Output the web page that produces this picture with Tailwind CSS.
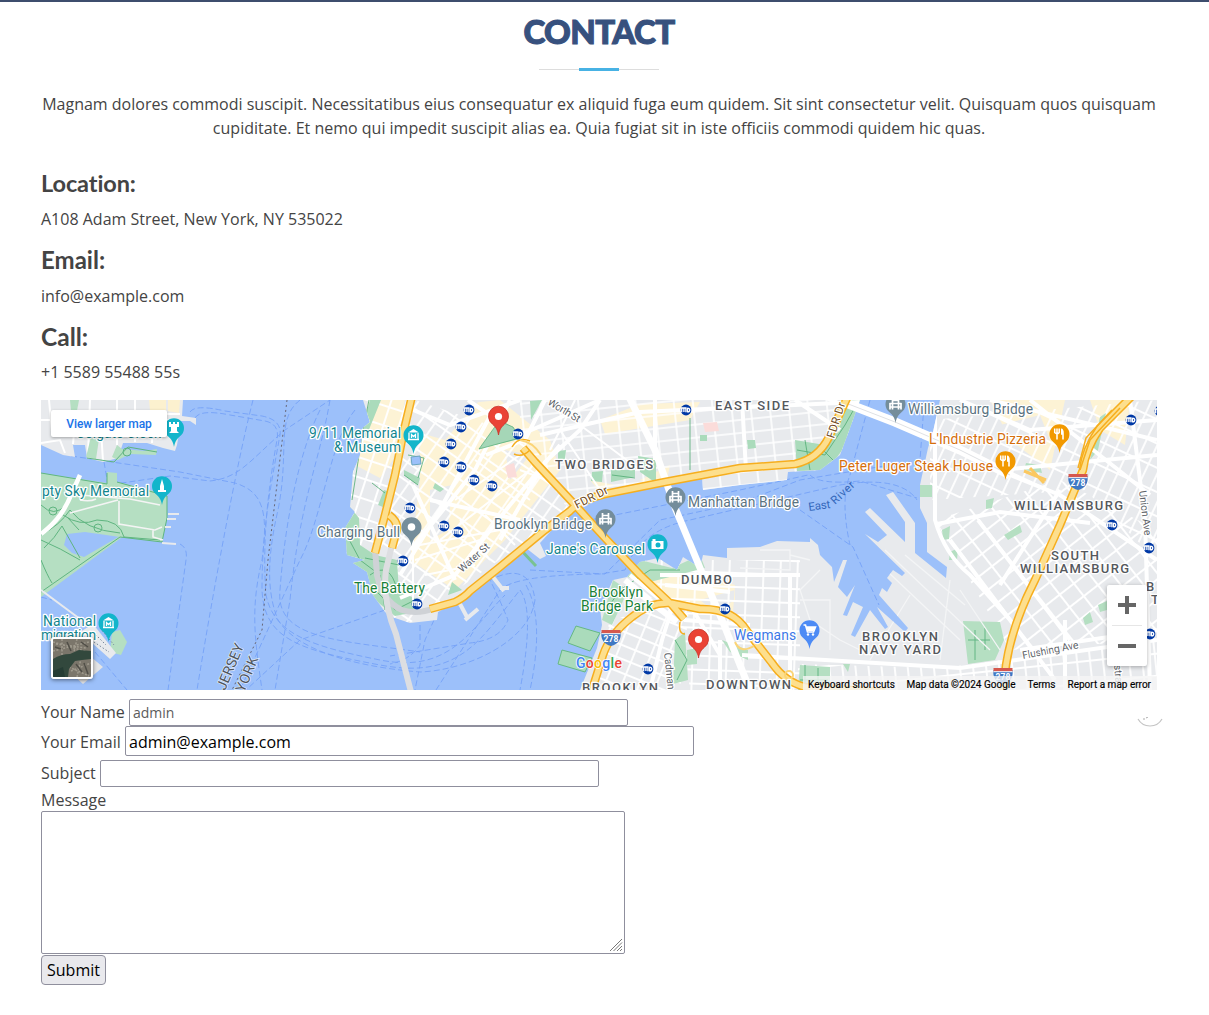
<!DOCTYPE html>
<html lang="en">
<head>
<meta charset="utf-8">
<title>Contact</title>
<script src="https://cdn.jsdelivr.net/npm/@tailwindcss/browser@4"></script>
</head>
<body class="bg-white font-['Open_Sans',sans-serif] text-base leading-6 text-[#444444] overflow-hidden">
<section class="relative h-[1015px] w-[1209px] border-t-2 border-[#3d4d6d] pl-[41px] pr-[52px]">
  <header class="flex flex-col items-center">
    <h2 class="mt-[11px] h-[38px] whitespace-nowrap font-[Lato,sans-serif] text-[33px] font-black leading-[37px] text-[#37517e]"><span class="inline-block tracking-[-0.6px] [-webkit-text-stroke:1.1px_#37517e]">CONTACT</span></h2>
    <div class="mt-[17px] flex h-[3px] w-[120px] items-center"><i class="h-px w-10 bg-[#dddddd]"></i><i class="h-[3px] w-10 bg-[#47b2e4]"></i><i class="h-px w-10 bg-[#dddddd]"></i></div>
    <p class="mt-[21px] text-center">Magnam dolores commodi suscipit. Necessitatibus eius consequatur ex aliquid fuga eum quidem. Sit sint consectetur velit. Quisquam quos quisquam<br>cupiditate. Et nemo qui impedit suscipit alias ea. Quia fugiat sit in iste officiis commodi quidem hic quas.</p>
  </header>
  <div class="mt-[29px] flex flex-col">
    <h4 class="h-[29px] font-[Lato,sans-serif] text-[23.5px] font-bold leading-[29px] tracking-[-0.1px]">Location:</h4>
    <p class="mt-[9px] mb-[15px] h-6">A108 Adam Street, New York, NY 535022</p>
    <h4 class="h-[29px] font-[Lato,sans-serif] text-[24px] font-bold leading-[28px]">Email:</h4>
    <p class="mt-[9px] mb-[15px] h-6">info@example.com</p>
    <h4 class="h-[29px] font-[Lato,sans-serif] text-[24.5px] font-bold leading-[28px]">Call:</h4>
    <p class="mt-[8px] mb-[16px] h-6">+1 5589 55488 55s</p>
  </div>

  <div class="relative h-[290px] w-[1116px] overflow-hidden font-[Roboto,sans-serif]">
  <svg class="block h-[290px] w-[1116px]" viewBox="41 400 1116 290" font-family="Roboto, sans-serif">
    <defs>
      <pattern id="gWest" width="15" height="19" patternUnits="userSpaceOnUse" patternTransform="rotate(18)"><path d="M0 1H15M1 0V19" stroke="#fff" stroke-width="2"/></pattern>
      <pattern id="gFin" width="13" height="16" patternUnits="userSpaceOnUse" patternTransform="rotate(35)"><path d="M0 1H13M1 0V16" stroke="#fff" stroke-width="1.8"/></pattern>
      <pattern id="gEast" width="19" height="13" patternUnits="userSpaceOnUse" patternTransform="rotate(-6)"><path d="M0 1H19M1 0V13" stroke="#fff" stroke-width="1.6"/></pattern>
      <pattern id="gDumbo" width="17" height="14" patternUnits="userSpaceOnUse" patternTransform="rotate(2)"><path d="M0 1H17M1 0V14" stroke="#fff" stroke-width="1.8"/></pattern>
      <pattern id="gHts" width="16" height="13" patternUnits="userSpaceOnUse" patternTransform="rotate(22)"><path d="M0 1H16M1 0V13" stroke="#fff" stroke-width="1.8"/></pattern>
      <pattern id="gWill" width="12" height="22" patternUnits="userSpaceOnUse" patternTransform="rotate(25)"><path d="M0 1H12M1 0V22" stroke="#fff" stroke-width="1.8"/></pattern>
      <pattern id="gSouth" width="18" height="16" patternUnits="userSpaceOnUse" patternTransform="rotate(-38)"><path d="M0 1H18M1 0V16" stroke="#fff" stroke-width="2"/></pattern>
      <pattern id="gLow" width="13" height="22" patternUnits="userSpaceOnUse" patternTransform="rotate(-6)"><path d="M0 1H13M1 0V22" stroke="#fff" stroke-width="1.8"/></pattern>
      <path id="pin" d="M0 19C-1 13-3 11-6 8.200A10 10 0 1 1 6 8.200C3 11 1 13 0 19Z"/>
      <g id="bridge" fill="none" stroke="#fff" stroke-width="1.700"><path d="M-3 -6V5.500M3 -6V5.500M-6 -.5H6M-6 3H6M-5.500 -1V5.500M5.500 -1V5.500M-3 -3.500H3"/></g>
      <g id="museum"><path d="M-5.500 -2.500L0 -6L5.500 -2.500Z" fill="#fff"/><path d="M-4.500 -2V4M4.500 -2V4M-5.500 4.500H5.500M-2 3V-.5L0 1.500L2-.5V3" stroke="#fff" stroke-width="1.300" fill="none"/></g>
      <g id="mta"><circle r="5.400" fill="#0039a6"/><path d="M-4.300 2.300V-2H-2.100V2M-2.100 -2H-.1V2.300M1.500 -2.200V2.300M1.500 -1.800C4.500 -1.800 4.500 2 1.500 2" fill="none" stroke="#fff" stroke-width="1.300"/></g>
      <g id="fork"><path d="M-4.800 -5.500V-1.500Q-2.500 1 -.3 -1.500V-5.500M-2.500 -5.500V5.500" stroke="#fff" stroke-width="1.500" fill="none"/><path d="M1.500 -5.500Q4.500 -5.500 4.300 0V5.500H2.700V.8H1.500Z" fill="#fff"/></g>
      <g id="shield"><path d="M-9.500 -4Q-7 -3 -5 -4.500Q0 -3 5 -4.500Q7 -3 9.500 -4Q11 7 0 10Q-11 7 -9.500 -4Z" fill="#3f78c4"/><path d="M-9.500 -6H9.500V-2.500H-9.500Z" fill="#d5574e"/><path d="M-9.500 -2.300H9.500" stroke="#fff"/><text x="0" y="5.500" text-anchor="middle" font-size="8.500" font-weight="700" fill="#fff" textLength="15">278</text></g>
      <clipPath id="man"><path d="M363 400L370 422L363 428L360 455L353 472L350 507L355 512L345 528L347 555L365 560L353 563L367 572L373 595L385 612L392 617L410 623L437 620L438 612L460 600L493 577L517 558L526 548L540 559L546 556L540 543L570 510L610 495L663 485L702 478L703 490L740 485L787 480L788 472L820 470L840 455L850 428L860 400Z"/></clipPath>
      <clipPath id="bk"><path id="bkp" d="M940 400L933 432L928 448L920 485V508L927 523V552L947 567L946 578L915 553V523L893 492L886 495L905 522V542L870 508L865 512L887 535L878 542L865 534L905 573L902 576L893 570L887 578L892 583L887 592L882 588L879 595L908 628L905 632L877 607L888 627L885 629L870 610L855 637L851 635L863 607L853 602L847 616L843 615L855 585L847 597L838 587L847 560L843 560L834 582L832 567L820 555L818 545L810 538V542L777 541L760 547L727 548V558L703 555L700 568L683 557L677 570L658 558L640 562L627 577L613 580L600 608L602 625L597 648L580 690H1157V400Z"/></clipPath>
    </defs>
    <rect x="41" y="400" width="1116" height="290" fill="#9cc0fa"/>

    <!-- ferry routes -->
    <g fill="none" stroke="#75a2f7" stroke-width=".9" stroke-dasharray="6 3">
      <path d="M71 456L180 472L235 483C265 492 268 515 262 560C250 610 255 640 262 690"/><path d="M104 462L108 485L170 476L210 481C240 478 250 460 285 430L330 400"/><path d="M253 400C235 470 210 610 197 690"/><path d="M180 544Q188 548 186 560L168 690"/><path d="M190 412Q195 404 225 411L262 416Q282 420 280 435C270 490 262 530 262 590C264 640 300 650 380 665S480 640 520 590"/><path d="M195 418Q200 409 230 415L265 421Q280 424 277 440C268 490 262 540 266 595C274 634 310 646 380 660S470 630 505 595"/><path d="M300 400C275 420 290 450 278 510C264 570 270 600 278 620C300 655 370 668 420 672C470 670 530 640 535 600Q530 560 490 580Q500 600 508 620Q500 640 470 643L390 656"/><path d="M330 400C320 460 300 500 290 600L275 690M320 410C300 450 285 520 280 590C275 640 340 640 420 652"/><path d="M355 410C330 440 322 520 300 560L240 690M385 610L300 640L246 690M41 597L52 600M95 652L127 690"/><path d="M420 625V645Q410 660 390 664M434 620L425 640L415 690M436 690L500 590Q515 575 600 574L625 570Q640 530 690 520L840 485Q900 475 917 500"/><path d="M520 590Q535 610 520 690M526 585Q545 620 530 690M530 570L605 574L660 520L740 503L800 480L920 460L924 405"/><path d="M800 510L853 547L879 605M870 400L850 475Q840 500 850 545M810 475Q820 485 860 481L917 498M590 520L740 490L808 475"/>
    </g>
    <path d="M287 400L268 560L262 630L232 690" fill="none" stroke="#667" stroke-width="1" stroke-dasharray="2 3"/>

    <!-- New Jersey shore -->
    <path d="M41 400H183L182 416L196 418V425L190 421H181L177 445L175 451L163 448L147 443H123L118 458L103 462L87 458L85 445H73L75 457L63 455L41 445Z" fill="#e8eaed"/>
    <path d="M41 443L60 440L65 453M49 400L52 432M77 400L73 444M41 420H178M90 400L88 455M101 430L103 461M117 400V445M135 400V442M154 400L152 443M145 414H180" stroke="#fff" stroke-width="2" fill="none"/>
    <path d="M149 400H166V411L150 410ZM168 400H180L179 413L168 411Z" fill="#fcf1cf"/>
    <g fill="#b5dfc2"><path d="M70 400H79L77 411H71ZM91 437L99 439L96 459L86 457ZM117 445L122 449L145 451L157 449L156 455L130 454L118 460L112 457ZM41 473L107 483V472L117 473V482L143 488L167 495V518L162 542L120 537L85 532L67 534L64 545L72 553L84 557L120 536L121 538L41 597Z"/><path d="M112 632L120 630L127 642L121 655L110 652Z"/></g>
    <g fill="none" stroke="#5fb580" stroke-width="1"><path d="M41 473L107 484V473M117 482L167 496V518L162 542L120 537L41 592M41 535Q60 525 70 510Q85 530 120 533M63 515Q80 527 97 520Q120 520 124 537L160 540M41 505Q54 518 66 505M41 540Q60 548 80 560M41 560Q47 575 52 583M44 548Q55 538 62 526L80 558M68 518L79 530"/><circle cx="98" cy="528" r="4"/><circle cx="53" cy="511" r="4"/><circle cx="127" cy="452" r="4"/><path d="M87 458L114 462L128 447L157 452"/></g>
    <path d="M41 534C57 522 65 510 72 493L80 475" fill="none" stroke="#fff" stroke-width="4.500"/>
    <path d="M80 495L130 499L160 505M119 501V524L155 530L162 527M153 529V537L163 540M80 500Q90 502 96 499M70 513L118 500" stroke="#f4f4f4" stroke-width="1.600" fill="none"/>
    <path d="M168 514H179M167 519H176M165 527H171M162 543L176 544" stroke="#e8eaed" stroke-width="2"/>
    <path d="M41 590L80 619" stroke="#e8eaed" stroke-width="2"/>
    <path d="M80 632L93 624L116 653L110 659L91 642Z" fill="#e8eaed"/><path d="M83 684L62 665L85 652L103 667Z" fill="#e3e4e6"/><path d="M93 632L106 645M100 628L114 645M91 640L109 652" stroke="#789" stroke-width="1" stroke-dasharray="1.500 2"/>

    <!-- Manhattan -->
    <g clip-path="url(#man)">
      <path d="M340 400H870V630H340Z" fill="#e8eaed"/>
      <path d="M369 400H405L393 460L380 478L357 466L363 430ZM420 440L450 405L500 400L550 440L560 470L505 540L455 590L410 560L420 480ZM600 420L640 404L700 402L690 420L605 434ZM640 480L670 465L665 490ZM590 480L615 485L600 492Z" fill="#fdf3d5"/>
      <path d="M425 400H480L445 440L410 430ZM430 490L452 485L448 530L430 540ZM505 450L530 455L510 480Z" fill="#e8eaed"/>
      <path d="M340 400H415L375 560H340Z" fill="url(#gWest)"/><path d="M415 400L520 435L570 510L400 630L370 570Z" fill="url(#gFin)"/><path d="M520 400H860V480L570 512L520 440Z" fill="url(#gEast)"/>
      <path d="M345 528L350 507L359 518L360 545L375 555L397 560L399 592L420 600L415 612L395 616L375 600L362 570L345 558ZM370 400H381L366 437H360ZM404 470L420 478L418 485L404 475ZM480 448L502 420L513 428L520 439ZM384 490L390 492L383 507L378 505ZM435 483L444 489L440 492L433 488ZM452 582L462 590L448 595ZM611 470H635V477L611 482ZM638 456L656 459V483L640 472ZM592 472L603 471L602 482L591 481ZM795 440L825 445L840 400H862L852 436L828 470L797 471ZM700 435H707V441H700ZM558 451L566 450L565 459L558 462ZM530 401L542 400L531 420ZM747 440H755L756 448L748 449Z" fill="#aadbbb"/>
      <g fill="none" stroke="#4fab72" stroke-width=".8"><path d="M350 510L344 530L360 560L380 575L385 610M365 558L399 565M369 400L363 430L352 500M372 483L385 493M404 475L418 485M797 450L825 455L845 425L858 402M805 440L810 470M820 447L835 462M690 418V470M370 575Q390 560 397 590M375 590L395 610L415 600M612 475L635 478M408 455L424 458L418 478"/></g>
      <path d="M703 423L717 422L719 431L705 432ZM505 466L514 463L517 477L508 478Z" fill="#fbdcda"/><path d="M411 457L420 456L421 464L412 465Z" fill="#9cc0fa" stroke="#6ba5c0"/>
      <g fill="none" stroke="#fff" stroke-width="4"><path d="M468 400L520 436M490 416L441 508L400 575M510 400L475 470L411 550M413 410L450 425L520 400M524 440L486 455M560 445L510 505L455 575L400 598M600 400L580 430L545 462L500 540M520 435L600 400M540 435L640 412L860 402M655 400V460M545 400L525 440M742 400L746 470M795 400L840 430M413 485L455 580M430 500L520 520" /></g>
      <path d="M479 449L499 421L513 427L520 438Z" fill="#a5d6b7" stroke="#4fab72" stroke-width=".7"/>
      <g fill="none" stroke="#fff" stroke-width="2"><path d="M420 545L500 530M415 560L480 540M425 575L475 565M475 460L530 500M455 500L520 455M440 540L530 470M485 515L515 545M460 520L490 560M413 523V600M560 410L640 470M560 430L600 490M575 400L550 450M520 470L560 485"/></g>
    </g>
    <path d="M459 602L468 619M465 620L478 609M493 577L504 591M500 588H509" stroke="#e8eaed" stroke-width="4" fill="none"/>
    <path d="M520 549L536 566" stroke="#79c291" stroke-width="3"/>

    <!-- Brooklyn -->
    <use href="#bkp" fill="#e8eaed"/>
    <g clip-path="url(#bk)">
      <path d="M648 575H700L735 585L733 612L670 605ZM990 400L1065 400L1050 470L1010 440ZM1090 400H1130L1125 445L1100 430ZM700 600L715 612L735 600V590Z" fill="#fdf3d5"/>
      <path d="M1000 425L1040 415L1050 440L1020 445Z" fill="#e8eaed"/>
      <path d="M610 620L690 600L680 690H590Z" fill="url(#gHts)"/><path d="M640 560L800 560L800 690H690L680 615Z" fill="url(#gDumbo)"/><path d="M930 420L1157 400V560L1085 490L930 500Z" fill="url(#gWill)"/><path d="M935 520L1060 480L1157 530V640L1010 650Z" fill="url(#gSouth)"/><path d="M798 664L940 668L1157 640V690H798Z" fill="url(#gLow)"/>
      <path d="M800 665L830 667V690H798ZM963 621L1000 622L1004 640L995 660L968 664ZM627 577L640 560L672 568L700 555L705 568L650 582ZM602 620L613 580L628 590L612 625ZM675 640L685 632L688 680L673 684ZM687 650L697 648V664L687 665ZM722 640L748 650V660L730 652ZM843 664H850L848 672ZM942 530L950 526L949 539L943 540ZM950 552L958 548L957 560L949 560ZM1026 463L1040 465L1042 473L1024 470ZM1004 535L1020 525L1022 532L1008 540ZM986 500L994 498L992 508L986 509ZM1100 417L1106 413L1098 450L1090 460ZM1083 618L1090 612L1093 622L1085 625ZM1098 605L1107 601V610L1100 612ZM920 485H932V497H920Z" fill="#b5dfc2"/>
      <path d="M800 680H828M805 665V690M818 668V690M968 640H990M975 630V660M985 628V650M605 612L620 590L650 570L680 570M675 640L687 660L677 680" stroke="#63b683" fill="none"/>
      <g fill="none" stroke="#f4f5f6" stroke-width="1.300"><path d="M760 550H790V570L740 568M820 570L800 590L810 620L840 640M870 555L960 640M885 550L990 650M905 555L965 605M950 580L940 660M910 595L870 660M840 640L870 655M790 555L810 560M800 600H830V650M960 590L1000 650"/></g>
      <g fill="none" stroke="#fff" stroke-width="4"><path d="M935 400V520Q945 555 970 575L1010 620M940 437L1010 475L1060 495L1157 560M937 524L1000 512L1090 523M1000 470L1157 455M950 540L1055 680M978 520L1070 640M1130 400L1145 520L1150 690M1065 620V690M742 655L960 668L1157 640M790 575V690M660 575H800M665 585L730 592M673 605L662 640L650 690M630 575L685 620L750 625M990 400L1157 440M1030 400L1150 495M720 640V690M1020 650L1157 630M1000 585L1060 490M960 400L1030 430L1157 420M690 605L720 655"/></g>
      <path d="M1024 471L1046 480M1030 468L1044 483" stroke="#fbc860" stroke-width="3" fill="none"/>
    </g>
    <path d="M576 626L600 633L590 651L568 643ZM562 650L592 658L585 672L558 664Z" fill="#aadbbb" stroke="#65b984"/>
    <path d="M635 590L677 622M625 580L650 600" stroke="#fff" stroke-width="6"/>

    <!-- tunnel approaches -->
    <path d="M375 549L377 575Q383 602 402 610Q418 615 434 608" fill="none" stroke="#cfd2d6" stroke-width="6"/>
    <path d="M392 545L386 570Q382 600 396 634L411 692" fill="none" stroke="#dddee1" stroke-width="6"/>

    <!-- bridges and highways -->
    <g fill="none" stroke-linejoin="round">
      <path d="M628 395L655 450L676 510L705 580L722 620L752 695" stroke="#fff" stroke-width="7"/>
      <path d="M825 395L895 422L960 450L1010 475" stroke="#fff" stroke-width="9"/><path d="M825 395L895 422L960 450L1010 475" stroke="#dfe1e4" stroke-width="1"/>
      <g stroke="#f6ae1e" stroke-width="8.500"><path d="M412 396L404 430L395 475L385 515L375 553M389 515Q400 523 396 533L392 548M430 609L455 602Q465 597 470 591L500 567L545 530L570 511Q580 500 605 494L665 482L740 468L795 464Q818 459 829 437L848 396"/><path d="M523 448L535 462L575 505L605 538L640 575L672 605L684 619M591 693L603 655Q610 634 632 617Q650 602 670 603L700 609Q733 608 747 631L772 663Q785 682 805 687L885 692M1131 397L1100 428Q1085 450 1083 470L1060 525L1035 580Q1012 625 1006 665L1003 693"/></g>
      <g stroke="#fddf8d" stroke-width="5.500"><path d="M412 396L404 430L395 475L385 515L375 553M389 515Q400 523 396 533L392 548M430 609L455 602Q465 597 470 591L500 567L545 530L570 511Q580 500 605 494L665 482L740 468L795 464Q818 459 829 437L848 396"/><path d="M523 448L535 462L575 505L605 538L640 575L672 605L684 619M591 693L603 655Q610 634 632 617Q650 602 670 603L700 609Q733 608 747 631L772 663Q785 682 805 687L885 692M1131 397L1100 428Q1085 450 1083 470L1060 525L1035 580Q1012 625 1006 665L1003 693"/></g>
      <path d="M1120 408L1090 440L1080 470M1112 410L1086 438L1078 468M512 447Q518 436 530 441M514 454Q522 458 530 450M680 622Q678 634 685 634" stroke="#f6ae1e" stroke-width="1.500"/>
      <g stroke="#fbd477" stroke-width="2"><circle cx="789" cy="675" r="4"/><path d="M520 440Q533 442 541 455M735 642Q740 654 754 646"/></g>
    </g>

    <!-- transit stops -->
    <use href="#mta" x="469" y="410"/><use href="#mta" x="461" y="427"/><use href="#mta" x="451" y="444"/><use href="#mta" x="444" y="462"/><use href="#mta" x="461" y="467"/><use href="#mta" x="474" y="480"/><use href="#mta" x="492" y="486"/><use href="#mta" x="410" y="508"/><use href="#mta" x="444" y="526"/><use href="#mta" x="458" y="532"/><use href="#mta" x="403" y="561"/><use href="#mta" x="417" y="604"/><use href="#mta" x="518" y="434"/><use href="#mta" x="686" y="410"/><use href="#mta" x="725" y="609"/><use href="#mta" x="648" y="669"/><use href="#mta" x="1131" y="420"/><use href="#mta" x="1112" y="525"/><use href="#mta" x="1149" y="548"/><use href="#mta" x="1150" y="634"/><use href="#mta" x="1160" y="411"/>
    <use href="#shield" x="611" y="636"/><use href="#shield" x="1078" y="480"/><use href="#shield" x="1003" y="674"/>

    <!-- place names -->
    <g font-size="13.800" stroke="#fff" stroke-width="2.500" stroke-linejoin="round" paint-order="stroke">
      <g fill="#11858e"><text x="76" y="438" textLength="85">Colgate Clock</text><text x="42" y="496" textLength="107">pty Sky Memorial</text><text x="43" y="626" textLength="53">National</text><text x="41" y="640" textLength="55">migration</text><text x="309" y="438" textLength="92">9/11 Memorial</text><text x="334" y="452" textLength="67">&amp; Museum</text><text x="546" y="554" textLength="99">Jane's Carousel</text></g>
      <g fill="#5a7381"><text x="317" y="537" textLength="83">Charging Bull</text><text x="494" y="529" textLength="98">Brooklyn Bridge</text><text x="688" y="507" textLength="111">Manhattan Bridge</text><text x="908" y="414" textLength="125">Williamsburg Bridge</text></g>
      <g fill="#188038"><text x="354" y="593" textLength="71">The Battery</text><text x="589" y="597" textLength="54">Brooklyn</text><text x="581" y="611" textLength="72">Bridge Park</text></g>
      <g fill="#d56e0c"><text x="929" y="444" textLength="117">L'Industrie Pizzeria</text><text x="839" y="471" textLength="154">Peter Luger Steak House</text></g>
      <text x="734" y="640" textLength="62" fill="#3b78e7">Wegmans</text>
      <g fill="#55585d" font-size="13" font-weight="500"><text x="715" y="410" textLength="74">EAST SIDE</text><text x="555" y="469" textLength="98">TWO BRIDGES</text><text x="681" y="584" textLength="51">DUMBO</text><text x="1014" y="510" textLength="109">WILLIAMSBURG</text><text x="1051" y="560" textLength="48">SOUTH</text><text x="1020" y="573" textLength="109">WILLIAMSBURG</text><text x="862" y="641" textLength="76">BROOKLYN</text><text x="859" y="654" textLength="82">NAVY YARD</text><text x="582" y="692" textLength="76">BROOKLYN</text><text x="706" y="689" textLength="85">DOWNTOWN</text><text x="1146" y="591">B</text><text x="1151" y="604">T</text></g>
      <g font-size="10.500" fill="#60646a"><text transform="translate(547 404) rotate(31)" textLength="36">Worth St</text><text transform="translate(462 573) rotate(-42)" textLength="38">Water St</text><text transform="translate(1139 491) rotate(83)" textLength="45">Union Ave</text><text transform="translate(1023 659) rotate(-11)" textLength="57">Flushing Ave</text><text transform="translate(664 653) rotate(84)" textLength="37">Cadman</text><text transform="translate(1114 665) rotate(85)">stra</text></g>
      <g font-size="11.500" fill="#704b24"><text transform="translate(577 509) rotate(-27)" textLength="36">FDR Dr</text><text transform="translate(834 439) rotate(-72)" textLength="37">FDR Dr</text></g>
    </g>
    <text transform="translate(809 511) rotate(-8)" font-size="11.500" fill="#3367bb" textLength="22">East</text><text transform="translate(835 505) rotate(-43)" font-size="11.500" fill="#3367bb" textLength="28">River</text>
    <g font-size="14" fill="#4d545d" stroke="#dce8fb" stroke-width="1.500" paint-order="stroke"><text transform="translate(225 691) rotate(-67)" textLength="49">JERSEY</text><text transform="translate(244 693) rotate(-67)" textLength="37">YORK</text></g>

    <!-- place pins -->
    <g transform="translate(174 428)"><use href="#pin" fill="#12b5cb"/><path d="M-5 -6H-3V-4H-1V-6H1V-4H3V-6H5V-1H3V3L5 5H-5L-3 3V-1H-5Z" fill="#fff"/></g>
    <g transform="translate(162 486)"><use href="#pin" fill="#12b5cb"/><path d="M0 -7L2 0L2 4H4V6H-4V4H-2V0Z" fill="#fff"/></g>
    <g transform="translate(108.500 623)"><use href="#pin" fill="#12b5cb"/><use href="#museum"/></g>
    <g transform="translate(413.500 435)"><use href="#pin" fill="#12b5cb"/><use href="#museum"/></g>
    <g transform="translate(657.500 544)"><use href="#pin" fill="#12b5cb"/><path d="M-6 -3H-5V-5H-2V-3H6V5H-6Z" fill="#fff"/><circle cx=".5" cy="1" r="2.500" fill="#12b5cb"/></g>
    <g transform="translate(411.500 527)"><use href="#pin" fill="#748d9b"/><circle r="3.800" fill="#fff"/></g>
    <g transform="translate(605.500 519)"><use href="#pin" fill="#748d9b"/><use href="#bridge"/></g><g transform="translate(675.500 497)"><use href="#pin" fill="#748d9b"/><use href="#bridge"/></g><g transform="translate(895.500 404)"><use href="#pin" fill="#748d9b"/><use href="#bridge"/></g>
    <g transform="translate(1059.500 434)"><use href="#pin" fill="#f29900"/><use href="#fork"/></g><g transform="translate(1005.500 461)"><use href="#pin" fill="#f29900"/><use href="#fork"/></g>
    <g transform="translate(809.500 630)"><use href="#pin" fill="#4d8bf5"/><path d="M-6 -5H-4L-2 2H4L6 -3H-3" fill="none" stroke="#fff" stroke-width="1.600"/><path d="M-3 -3H6L4 1H-2Z" fill="#fff"/><circle cx="-1.500" cy="4.500" r="1.200" fill="#fff"/><circle cx="3.500" cy="4.500" r="1.200" fill="#fff"/></g>
    <g fill="#ea4335" stroke="#c5362b" stroke-width=".8"><use href="#pin" x="498.500" y="416"/><use href="#pin" x="698.500" y="639"/></g><circle cx="498.500" cy="416.500" r="3.600" fill="#fff"/><circle cx="698.500" cy="639.500" r="3.600" fill="#fff"/>
    <text x="576" y="668" font-size="14" font-weight="500" textLength="46" stroke="#fff" stroke-width="1.500" paint-order="stroke" fill="#4285f4">G<tspan fill="#ea4335">o</tspan><tspan fill="#fbbc05">o</tspan><tspan fill="#4285f4">g</tspan><tspan fill="#34a853">l</tspan><tspan fill="#ea4335">e</tspan></text>
  </svg>
    <div class="absolute left-[10px] top-[10px] flex h-[27px] w-[116px] items-center justify-center rounded-[2px] bg-white text-[12px] font-medium text-[#1a73e8] shadow-[0_1px_3px_rgba(0,0,0,0.3)]"><span class="whitespace-nowrap tracking-[-0.1px]">View larger map</span></div>
    <div class="absolute left-[10px] top-[237px] h-[42px] w-[42px] overflow-hidden rounded-[3px] border-2 border-white shadow-[0_1px_4px_rgba(0,0,0,0.5)]">
      <svg viewBox="0 0 38 38" class="block h-[38px] w-[38px]"><rect width="38" height="38" fill="#7b766b"/><path d="M0 3L38 14M0 12L36 3M9 0V16M24 0L21 13M3 5L33 9M18 32L38 24M24 38L28 19M16 28L36 37" stroke="#a09b8e" stroke-width="1.500" stroke-dasharray="2 1.500"/><path d="M0 20Q8 15 17 15L26 11L38 12V20L29 21L22 22L16 30L15 38H0Z" fill="#32483d"/><path d="M0 32L10 28L12 38H0Z" fill="#253c34"/><path d="M2 8L8 10M14 3L18 12M28 3L35 8M23 25L29 33M31 24L35 35" stroke="#504e47" stroke-width="1.500"/></svg>
    </div>
    <div class="absolute left-[1066px] top-[185px] flex h-[81px] w-10 flex-col items-center rounded-[2px] bg-white shadow-[0_1px_4px_rgba(0,0,0,0.3)]">
      <svg viewBox="0 0 40 40" class="h-10 w-10"><path d="M20 11V29M11 20H29" stroke="#666" stroke-width="4"/></svg><i class="h-px w-[30px] bg-[#e6e6e6]"></i><svg viewBox="0 0 40 40" class="h-10 w-10"><path d="M11 20H29" stroke="#666" stroke-width="4"/></svg>
    </div>
    <div class="absolute bottom-0 right-0 flex h-[14px] w-[354px] items-end bg-[#f5f5f5]/80 pl-[5px]">
      <svg class="h-[10px] w-[349px] overflow-visible" viewBox="0 0 349 10" font-family="Roboto, sans-serif" font-size="10"><g fill="#000" stroke="#000" stroke-width=".15"><text x="0" y="8" textLength="87">Keyboard shortcuts</text><text x="98.500" y="8" textLength="109">Map data ©2024 Google</text><text x="219.500" y="8" textLength="28">Terms</text><text x="259.500" y="8" textLength="83.500">Report a map error</text></g></svg>
    </div>
  </div>

  <form class="mt-[9px] flex flex-col items-start">
    <label class="flex h-[27px] items-center gap-[4px]"><span class="w-[84px] whitespace-nowrap pb-[2px]">Your Name</span><input type="text" value="admin" class="h-[27px] w-[499px] rounded-[2px] border border-[#8f8f9d] bg-white px-[3px] text-[14px] text-[#5c5c5c]"></label>
    <label class="flex h-[30px] items-center gap-[4px]"><span class="w-[80px] whitespace-nowrap pt-[2px]">Your Email</span><input type="text" value="admin@example.com" class="h-[30px] w-[569px] rounded-[2px] border border-[#8f8f9d] bg-white px-[3px] pt-[2px] text-base text-black"></label>
    <label class="mt-[4px] flex h-[27px] items-center gap-[4px]"><span class="w-[55px] whitespace-nowrap pb-[2px]">Subject</span><input type="text" class="h-[27px] w-[499px] rounded-[2px] border border-[#8f8f9d] bg-white px-[3px]"></label>
    <label for="msg" class="mt-px h-[23px] leading-6">Message</label>
    <div class="relative h-[143px] w-[584px]">
      <textarea id="msg" class="block h-[143px] w-[584px] resize-none rounded-[2px] border border-[#8f8f9d] bg-white p-[3px]"></textarea>
      <svg viewBox="0 0 14 14" class="absolute bottom-[2px] right-[2px] h-[14px] w-[14px]"><path d="M1 13L13 1M4.500 13L13 4.500M8 13L13 8M11 13L13 11" stroke="#777" stroke-width="1"/></svg>
    </div>
    <button type="button" class="mt-px h-[30px] w-[65px] rounded-[4px] border border-[#8f8f9d] bg-[#e9e9ed] leading-[28px] text-black">Submit</button>
  </form>
  <svg viewBox="0 0 26 10" class="absolute left-[1137px] top-[715px] h-[10px] w-[26px]"><path d="M1 2Q5 9 13 9T25 2" fill="none" stroke="#c4c4c4" stroke-width="1.200"/><path d="M6 2H8M9 1L11 0" stroke="#aaa"/></svg>
</section>
</body>
</html>
